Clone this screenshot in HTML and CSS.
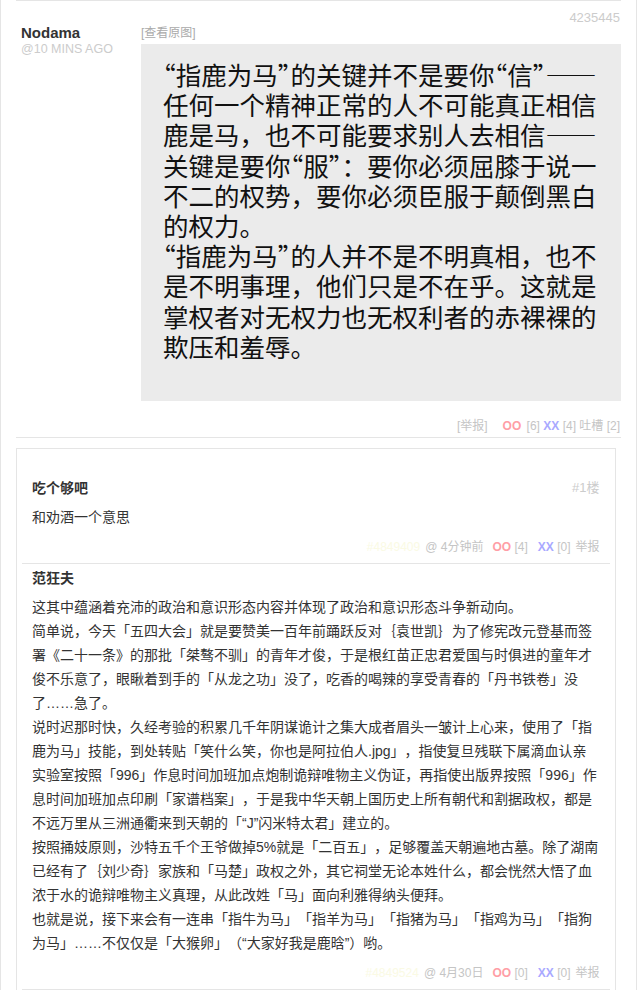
FILE: index.html
```html
<!DOCTYPE html>
<html lang="zh-CN">
<head>
  <meta charset="UTF-8">
  <meta name="viewport" content="width=device-width, initial-scale=1.0">
  <title>Nodama - 4235445</title>
  <link rel="stylesheet" href="styles.css">
</head>
<body>
  <div class="main">
    <div class="post">
      <div class="post-id">4235445</div>
      <div class="post-row">
        <div class="author">
          <strong>Nodama</strong>
          <small>@10 mins ago</small>
        </div>
        <div class="post-body">
          <a class="view-orig" href="#">[查看原图]</a>
          <div class="pic">
            <p>
              <span class="q">“</span>指鹿为马<span class="q">”</span>的关键并不是要你<span class="q">“</span>信<span class="q">”</span>——<br>
              任何一个精神正常的人不可能真正相信<br>
              鹿是马，也不可能要求别人去相信——<br>
              关键是要你<span class="q">“</span>服<span class="q">”</span>：要你必须屈膝于说一<br>
              不二的权势，要你必须臣服于颠倒黑白<br>
              的权力。<br>
              <span class="q">“</span>指鹿为马<span class="q">”</span>的人并不是不明真相，也不<br>
              是不明事理，他们只是不在乎。这就是<br>
              掌权者对无权力也无权利者的赤裸裸的<br>
              欺压和羞辱。
            </p>
          </div>
        </div>
      </div>
      <div class="post-foot">
        <a class="report" href="#">[举报]</a><b class="oo">OO</b> [6] <b class="xx">XX</b> [4] 吐槽 [2]
      </div>
    </div>

    <ol class="comments">
      <li class="comment">
        <div class="comment-head">
          <strong>吃个够吧</strong>
          <span class="floor">#1楼</span>
        </div>
        <div class="comment-text">
          <p>和劝酒一个意思</p>
        </div>
        <div class="comment-foot">
          <span class="cid">#4849409</span>@ 4分钟前<span class="vote"><b class="oo">OO</b> [4]</span><span class="vote vote-xx"><b class="xx">XX</b> [0]</span><a class="report" href="#">举报</a>
        </div>
      </li>
      <li class="comment">
        <div class="comment-head">
          <strong>范狂夫</strong>
        </div>
        <div class="comment-text">
          <p>这其中蕴涵着充沛的政治和意识形态内容并体现了政治和意识形态斗争新动向。</p>
          <p>简单说，今天「五四大会」就是要赞美一百年前踊跃反对｛袁世凯｝为了修宪改元登基而签署《二十一条》的那批「桀骜不驯」的青年才俊，于是根红苗正忠君爱国与时俱进的童年才俊不乐意了，眼瞅着到手的「从龙之功」没了，吃香的喝辣的享受青春的「丹书铁卷」没了……急了。</p>
          <p>说时迟那时快，久经考验的积累几千年阴谋诡计之集大成者眉头一皱计上心来，使用了「指鹿为马」技能，到处转贴「笑什么笑，你也是阿拉伯人.jpg」，指使复旦残联下属滴血认亲实验室按照「996」作息时间加班加点炮制诡辩唯物主义伪证，再指使出版界按照「996」作息时间加班加点印刷「家谱档案」，于是我中华天朝上国历史上所有朝代和割据政权，都是不远万里从三洲通衢来到天朝的「“J”闪米特太君」建立的。</p>
          <p>按照捅妓原则，沙特五千个王爷做掉5%就是「二百五」，足够覆盖天朝遍地古墓。除了湖南已经有了｛刘少奇｝家族和「马楚」政权之外，其它祠堂无论本姓什么，都会恍然大悟了血浓于水的诡辩唯物主义真理，从此改姓「马」面向利雅得纳头便拜。</p>
          <p>也就是说，接下来会有一连串「指牛为马」「指羊为马」「指猪为马」「指鸡为马」「指狗为马」……不仅仅是「大猴卵」（“大家好我是鹿晗”）哟。</p>
        </div>
        <div class="comment-foot">
          <span class="cid">#4849524</span>@ 4月30日<span class="vote"><b class="oo">OO</b> [0]</span><span class="vote vote-xx"><b class="xx">XX</b> [0]</span><a class="report" href="#">举报</a>
        </div>
      </li>
    </ol>
  </div>
</body>
</html>
```

FILE: styles.css
```css
* {
  box-sizing: border-box;
}

body {
  margin: 0;
  background: #fff;
  color: #333;
  font-family: "Liberation Sans", "Noto Sans CJK SC", sans-serif;
  text-spacing-trim: space-all; /* keep full-width punctuation */
}

a {
  color: inherit;
  text-decoration: none;
}

.main {
  width: 637px;
  min-height: 990px;
  padding-left: 15px;
  border-left: 1px solid #e5e5e5;
  border-right: 1px solid #e5e5e5;
}

/* post */
.post {
  width: 605px;
  border-top: 1px solid #e5e5e5;
  border-bottom: 1px solid #e5e5e5;
}

.post-id {
  padding-top: 9px;
  padding-right: 1px;
  text-align: right;
  font-size: 13px;
  line-height: 16px;
  color: #ccc;
}

.post-row {
  display: flex;
}

.author {
  width: 125px;
  padding-left: 5px;
}

.author strong {
  display: block;
  margin-top: -1px;
  font-size: 15px;
  line-height: 16px;
  color: #333;
}

.author small {
  display: block;
  font-size: 12.5px;
  line-height: 16px;
  color: #ccc;
  text-transform: uppercase;
}

.post-body {
  width: 480px;
}

.view-orig {
  display: block;
  font-size: 12px;
  line-height: 14px;
  color: #aaa;
}

.pic {
  height: 357px;
  margin-top: 4px;
  padding: 15px 0 0 22px;
  background: #ebebeb;
}

.pic p {
  margin: 0;
  font-family: "Noto Sans CJK SC", sans-serif;
  font-size: 25.5px;
  line-height: 30.2px;
  color: #111;
  white-space: nowrap;
}

.pic .q {
  font-feature-settings: "halt";
}

.post-foot {
  padding: 15px 1px 1px 0;
  text-align: right;
  font-size: 12px;
  line-height: 20px;
  color: #c5c5c5;
}

.post-foot .report {
  margin-right: 15px;
}

.post-foot .oo {
  margin-right: 2px;
}

.oo {
  color: #ff9ea6;
}

.xx {
  color: #a9a9ff;
}

/* comments */
.comments {
  width: 600px;
  margin: 10px 0 0;
  padding: 25px 0 0;
  list-style: none;
  border: 1px solid #e5e5e5;
}

.comment {
  margin: 0 5px;
  padding: 2px 10.5px 4px 10px;
  border-bottom: 1px solid #e5e5e5;
}

.comment-head {
  display: flex;
  justify-content: space-between;
  align-items: center;
  line-height: 24px;
}

.comment-head strong {
  font-size: 14px;
}

.floor {
  font-size: 13px;
  color: #ccc;
}

.comment-text {
  margin-top: 5px;
  font-size: 14px;
  line-height: 24px;
  color: #333;
}

.comment-text p {
  margin: 0;
}

.comment-foot {
  margin-top: 6px;
  text-align: right;
  font-size: 12px;
  line-height: 24px;
  color: #c5c5c5;
}

.cid {
  margin-right: 5px;
  color: #fafae4;
}

.vote {
  margin-left: 9px;
}

.vote-xx {
  margin-left: 10px;
}

.comment-foot .report {
  margin-left: 5px;
}
```
